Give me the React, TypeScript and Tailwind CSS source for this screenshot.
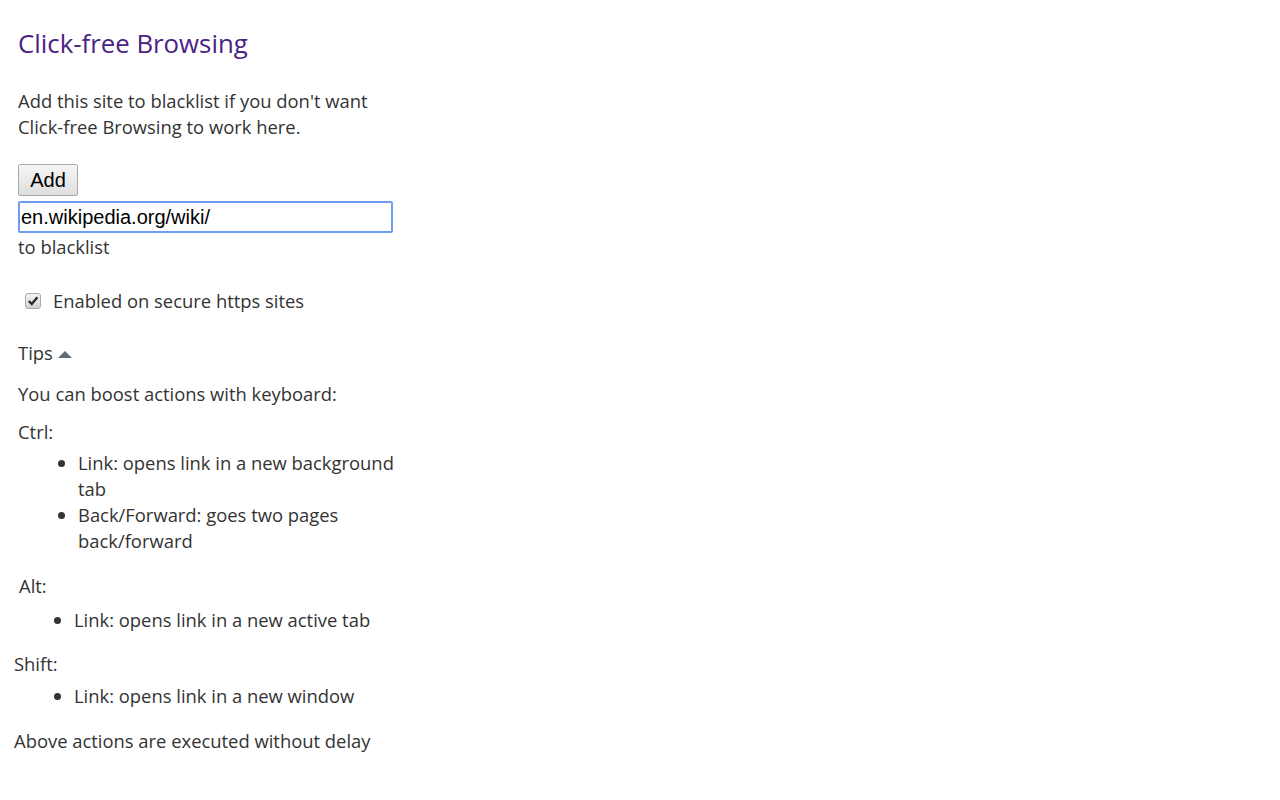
export default function App() {
  return (
    <div
      className="min-h-screen bg-white text-[18.4px] leading-[26px] text-[#333333]"
      style={{ fontFamily: '"Open Sans", "Noto Sans", sans-serif' }}
    >
      <div className="w-[400px] pt-[26px]">
        <div className="pl-[18px]">
          <h1 className="text-[25.8px] leading-[34px] text-[#4b2384]">Click-free Browsing</h1>

          <p className="mt-[28px]">
            Add this site to blacklist if you don't want
            <br />
            Click-free Browsing to work here.
          </p>

          <div className="mt-[24px]">
            <button
              className="h-[32px] w-[60px] rounded-[2px] border border-[#a9a9a9] bg-gradient-to-b from-[#f6f6f6] to-[#dedede] text-[20px] text-black"
              style={{ fontFamily: '"Liberation Sans", Arial, sans-serif' }}
            >
              Add
            </button>
          </div>
          <input
            type="text"
            defaultValue="en.wikipedia.org/wiki/"
            className="mt-[5px] block h-[32px] w-[375px] rounded-[2px] border-2 border-[#6f9cf2] px-[1px] text-[20px] text-black outline-none"
            style={{ fontFamily: '"Liberation Sans", Arial, sans-serif' }}
          />
          <div className="mt-[1px]">to blacklist</div>

          <label className="mt-[28px] flex items-center gap-[12px] pl-[7px]">
            <span className="flex h-[16px] w-[16px] shrink-0 items-center justify-center rounded-[3px] border border-[#a8a8a8] bg-gradient-to-b from-[#f4f4f4] to-[#d2d2d2]">
              <svg width="12" height="12" viewBox="0 0 12 12">
                <path d="M1.8 6 L4.8 9 L10.4 2.3" fill="none" stroke="#2a2a2a" strokeWidth="2.4" />
              </svg>
            </span>
            <span>Enabled on secure https sites</span>
          </label>

          <div className="mt-[26px] flex items-center gap-[4px]">
            <span>Tips</span>
            <svg width="16" height="10" viewBox="0 0 16 10" className="mt-[1px]">
              <path d="M1 9 L8 2 L15 9 Z" fill="#5d6b7b" />
            </svg>
          </div>

          <p className="mt-[15px]">You can boost actions with keyboard:</p>

          <div className="mt-[12px]">Ctrl:</div>
          <ul className="mt-[5px] list-disc pl-[60px]">
            <li>Link: opens link in a new background tab</li>
            <li>Back/Forward: goes two pages back/forward</li>
          </ul>

          <div className="mt-[19px] pl-[1px]">Alt:</div>
        </div>

        <ul className="mt-[8px] list-disc pl-[74px]">
          <li>Link: opens link in a new active tab</li>
        </ul>

        <div className="mt-[18px] pl-[14px]">Shift:</div>
        <ul className="mt-[6px] list-disc pl-[74px]">
          <li>Link: opens link in a new window</li>
        </ul>

        <p className="mt-[19px] pl-[14px]">Above actions are executed without delay</p>
      </div>
    </div>
  )
}
